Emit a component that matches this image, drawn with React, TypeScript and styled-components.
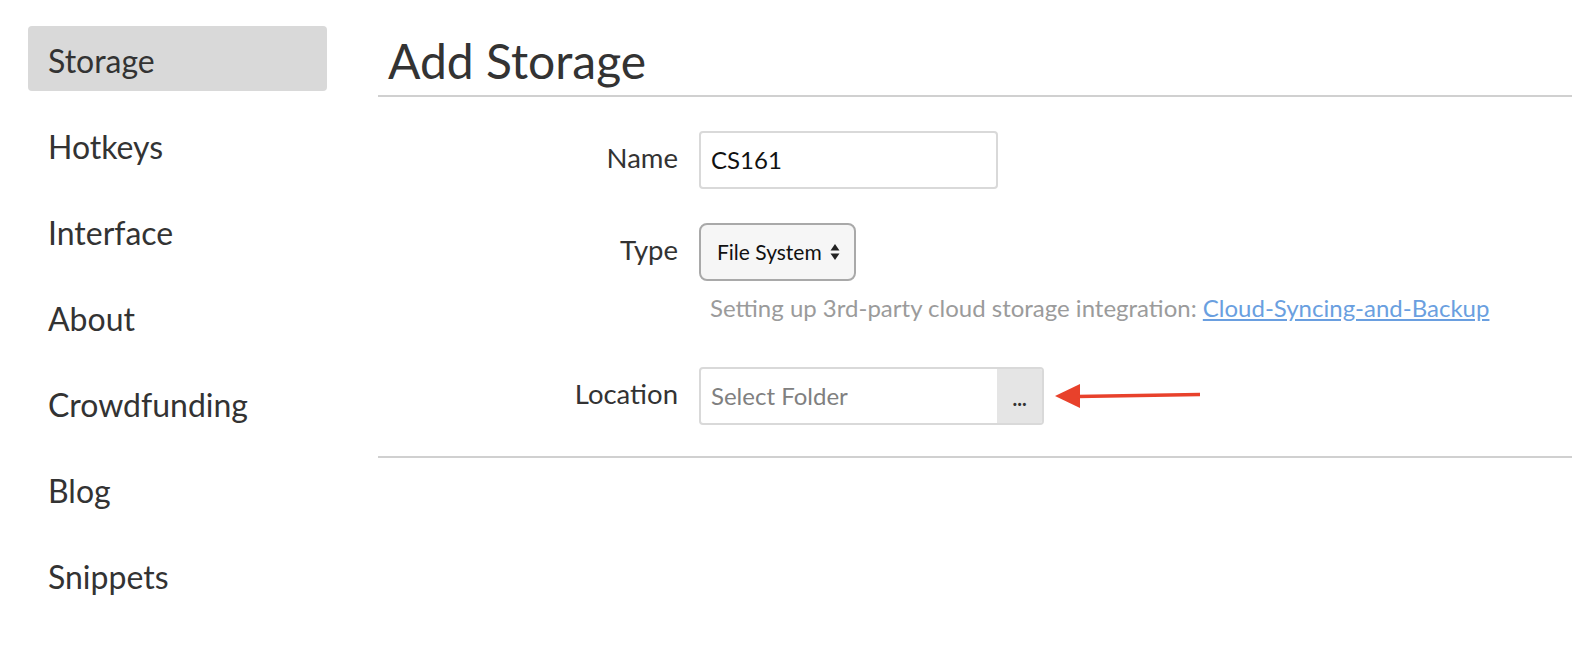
import React from "react";
import styled, { createGlobalStyle } from "styled-components";

const Global = createGlobalStyle`
  html, body { margin: 0; padding: 0; background: #fff; }
  body { font-family: Lato, "Open Sans", sans-serif; color: #333; }
`;

const Page = styled.div`
  display: flex;
  width: 1572px;
  height: 652px;
  overflow: hidden;
`;

const Sidebar = styled.nav`
  width: 299px;
  margin-left: 28px;
  padding-top: 26px;
  display: flex;
  flex-direction: column;
  gap: 21px;
  flex-shrink: 0;
`;

const NavItem = styled.div<{ $active?: boolean }>`
  height: 65px;
  line-height: 69px;
  padding-left: 20px;
  font-size: 32px;
  color: #333;
  border-radius: 4px;
  background: ${(p) => (p.$active ? "#d9d9d9" : "transparent")};
`;

const Main = styled.main`
  flex: 1;
  margin-left: 51px;
  display: flex;
  flex-direction: column;
`;

const Header = styled.div`
  padding: 32px 0 5px 10px;
  border-bottom: 2px solid #d0d0d0;
`;

const Title = styled.h1`
  margin: 0;
  font-size: 48px;
  font-weight: 400;
  line-height: 1.2;
  color: #333;
`;

const Form = styled.div`
  padding: 34px 0 31px;
  border-bottom: 2px solid #d0d0d0;
  display: flex;
  flex-direction: column;
`;

const Row = styled.div<{ $mt?: number }>`
  display: flex;
  align-items: center;
  margin-top: ${(p) => p.$mt ?? 0}px;
`;

const Label = styled.label`
  width: 321px;
  text-align: right;
  padding-right: 21px;
  padding-bottom: 4px;
  font-size: 27.5px;
  color: #333;
  box-sizing: border-box;
`;

const TextInput = styled.div`
  width: 299px;
  height: 58px;
  box-sizing: border-box;
  border: 2px solid #d9d9d9;
  border-radius: 4px;
  padding-left: 10px;
  display: flex;
  align-items: center;
  font-size: 24px;
  color: #111;
`;

const Select = styled.div`
  height: 58px;
  box-sizing: border-box;
  border: 2px solid #a9a9a9;
  border-radius: 8px;
  background: #f6f6f6;
  padding: 0 14px 0 16px;
  display: flex;
  align-items: center;
  gap: 8px;
  font-size: 21px;
  color: #111;
`;

const Help = styled.div`
  margin-left: 332px;
  margin-top: 12px;
  font-size: 24px;
  color: #9b9b9b;
  line-height: 30px;
`;

const Link = styled.a`
  color: #6a9fe0;
  text-decoration: underline;
`;

const LocationBox = styled.div`
  display: flex;
  width: 345px;
  height: 58px;
  box-sizing: border-box;
  border: 2px solid #d9d9d9;
  border-radius: 4px;
  overflow: hidden;
`;

const Placeholder = styled.div`
  flex: 1;
  display: flex;
  align-items: center;
  padding-left: 10px;
  font-size: 24px;
  color: #808080;
`;

const DotsButton = styled.div`
  width: 45px;
  background: #e5e5e5;
  display: flex;
  align-items: center;
  justify-content: center;
  font-size: 20px;
  font-weight: 700;
  color: #333;
  padding-top: 4px;
  box-sizing: border-box;
`;

const Arrow = styled.svg`
  margin-left: 9px;
  display: block;
`;

export default function App() {
  const items = ["Storage", "Hotkeys", "Interface", "About", "Crowdfunding", "Blog", "Snippets"];
  return (
    <>
      <Global />
      <Page>
        <Sidebar>
          {items.map((it, i) => (
            <NavItem key={it} $active={i === 0}>
              {it}
            </NavItem>
          ))}
        </Sidebar>
        <Main>
          <Header>
            <Title>Add Storage</Title>
          </Header>
          <Form>
            <Row>
              <Label>Name</Label>
              <TextInput>CS161</TextInput>
            </Row>
            <Row $mt={34}>
              <Label>Type</Label>
              <Select>
                File System
                <svg width="10" height="18" viewBox="0 0 10 18">
                  <path d="M5 1 L9.5 7.5 L0.5 7.5 Z" fill="#222" />
                  <path d="M5 17 L9.5 10.5 L0.5 10.5 Z" fill="#222" />
                </svg>
              </Select>
            </Row>
            <Help>
              Setting up 3rd-party cloud storage integration:{" "}
              <Link>Cloud-Syncing-and-Backup</Link>
            </Help>
            <Row $mt={44}>
              <Label>Location</Label>
              <LocationBox>
                <Placeholder>Select Folder</Placeholder>
                <DotsButton>...</DotsButton>
              </LocationBox>
              <Arrow width="150" height="30" viewBox="0 0 150 30">
                <path d="M2 15 L27 3 L27 27 Z" fill="#e8412b" />
                <path d="M24 15.5 L147 13.5" stroke="#e8412b" strokeWidth="3.5" />
              </Arrow>
            </Row>
          </Form>
        </Main>
      </Page>
    </>
  );
}
